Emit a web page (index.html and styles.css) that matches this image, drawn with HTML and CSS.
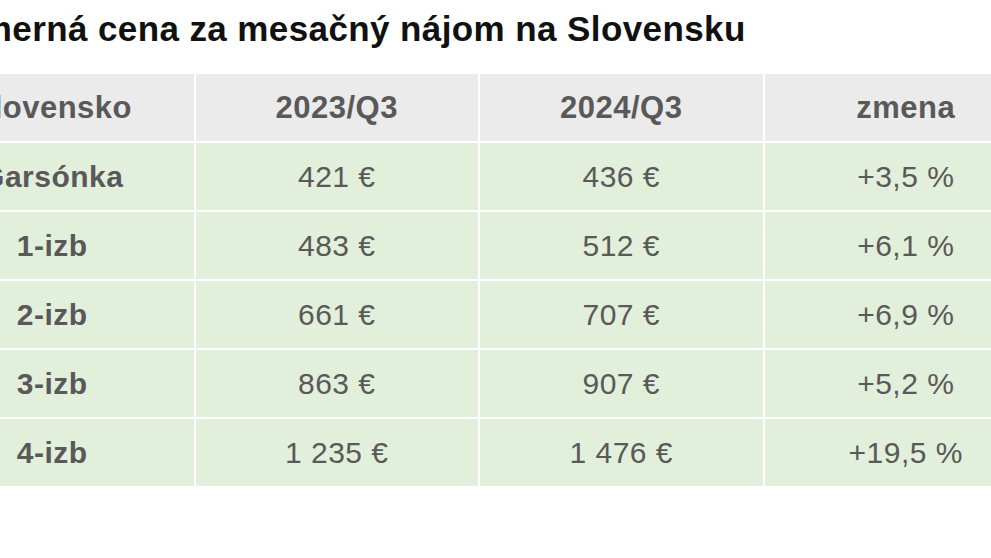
FILE: index.html
```html
<!DOCTYPE html>
<html lang="sk">
<head>
<meta charset="utf-8">
<link rel="stylesheet" href="styles.css">
</head>
<body>
<div class="wrap">
  <h2 class="title">Priemerná cena za mesačný nájom na Slovensku</h2>
  <table class="rent">
    <thead>
      <tr><th>Slovensko</th><th>2023/Q3</th><th>2024/Q3</th><th>zmena</th></tr>
    </thead>
    <tbody>
      <tr><th>Garsónka</th><td>421 €</td><td>436 €</td><td>+3,5 %</td></tr>
      <tr><th>1-izb</th><td>483 €</td><td>512 €</td><td>+6,1 %</td></tr>
      <tr><th>2-izb</th><td>661 €</td><td>707 €</td><td>+6,9 %</td></tr>
      <tr><th>3-izb</th><td>863 €</td><td>907 €</td><td>+5,2 %</td></tr>
      <tr><th>4-izb</th><td>1 235 €</td><td>1 476 €</td><td>+19,5 %</td></tr>
    </tbody>
  </table>
</div>
</body>
</html>
```
FILE: styles.css
```css
html, body {
  margin: 0;
  padding: 0;
  background: #ffffff;
  overflow: hidden;
}
.wrap {
  margin-left: -91px;
  width: 1140px;
  font-family: "Liberation Sans", Arial, sans-serif;
}
.title {
  margin: 0 0 0 4px;
  padding-top: 9px;
  height: 72px;
  box-sizing: border-box;
  font-size: 35px;
  line-height: 40px;
  font-weight: 700;
  letter-spacing: 0.4px;
  color: #111111;
  white-space: nowrap;
}
.rent {
  width: 1140px;
  table-layout: fixed;
  border-collapse: collapse;
  color: #595959;
  font-size: 30px;
  letter-spacing: 0.5px;
}
.rent th, .rent td {
  height: 67px;
  padding: 0;
  text-align: center;
  border: 2px solid #ffffff;
  vertical-align: middle;
}
.rent thead th {
  background: #ebebeb;
  font-weight: 700;
  font-size: 31px;
}
.rent tbody th, .rent tbody td {
  background: #e2efda;
}
.rent tbody th {
  font-weight: 700;
}
.rent td {
  font-weight: 400;
}
```
